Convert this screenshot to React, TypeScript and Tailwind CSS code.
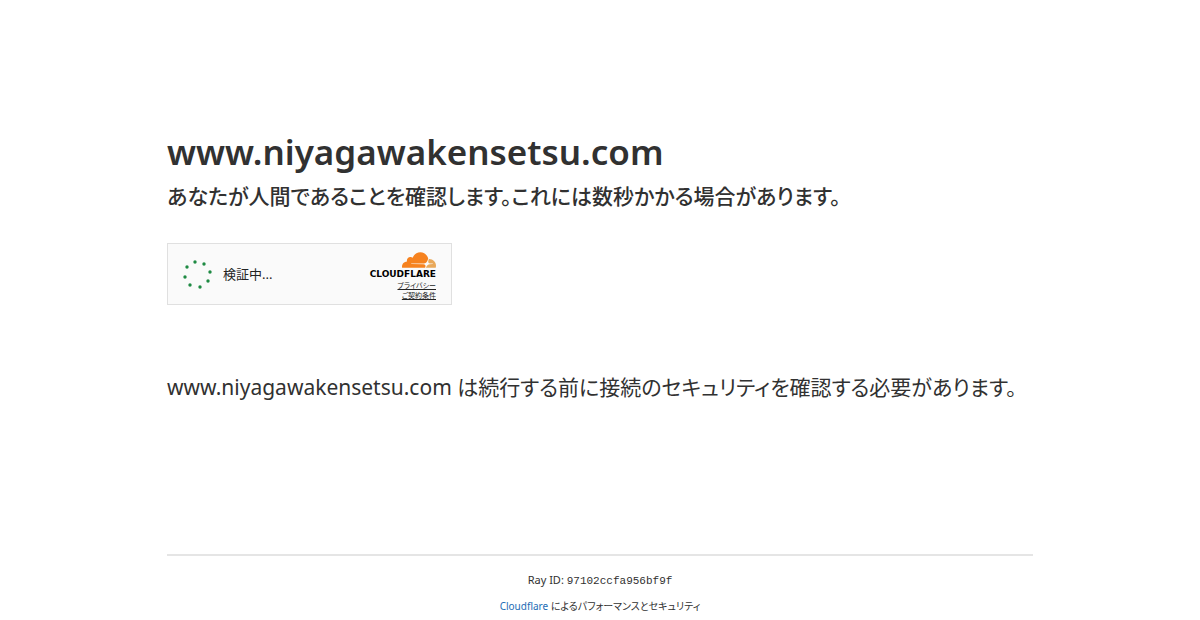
const HOST = "www.niyagawakensetsu.com"
const RAY_ID = "97102ccfa956bf9f"

function Spinner() {
  const dots = [
    [13, 3],
    [22, 5],
    [28, 13],
    [26, 22],
    [18, 28],
    [8, 26],
    [3, 18],
    [5, 8],
  ]

  return (
    <svg viewBox="0 0 31 31" className="size-[31px] shrink-0 fill-[#1e8a43]" aria-hidden="true">
      {dots.map(([cx, cy]) => (
        <circle key={`${cx}-${cy}`} cx={cx} cy={cy} r={1.7} />
      ))}
    </svg>
  )
}

function CloudLogo() {
  return (
    <svg viewBox="0 6.5 24 11" className="h-4 w-[34px]" aria-hidden="true">
      <path
        fill="#f6821f"
        d="M16.5088 16.8447c.1475-.5068.0908-.9707-.1553-1.3154-.2246-.3164-.6045-.499-1.0615-.5205l-8.6592-.1123a.1559.1559 0 0 1-.1333-.0713c-.0283-.042-.0351-.0986-.021-.1553.0278-.084.1123-.1484.2036-.1562l8.7359-.1123c1.0351-.0489 2.1601-.8868 2.5537-1.9136l.499-1.3013c.0215-.0561.0293-.1128.0147-.168-.5625-2.5463-2.835-4.4453-5.5499-4.4453-2.5039 0-4.6284 1.6177-5.3876 3.8614-.4927-.3658-1.1187-.5625-1.794-.499-1.2026.119-2.1665 1.083-2.2861 2.2856-.0283.31-.0069.6128.0635.894C1.5683 13.171 0 14.7754 0 16.752c0 .1748.0142.3515.0352.5273.0141.083.0844.1475.1689.1475h15.9814c.0909 0 .1758-.0645.2032-.1553l.12-.4268z"
      />
      <path
        fill="#e9a95b"
        d="M19.2656 11.2813c-.0771 0-.1611 0-.2383.0112-.0566 0-.1054.0415-.127.0976l-.3378 1.1744c-.1475.5068-.0918.9707.1543 1.3164.2256.3164.6055.498 1.0625.5195l1.8437.1133c.0557 0 .1055.0263.1329.0703.0283.043.0351.1074.0214.1562-.0283.084-.1132.1485-.204.1553l-1.921.1123c-1.041.0488-2.1582.8867-2.5527 1.914l-.1406.3585c-.0283.0713.0215.1416.0986.1416h6.5977c.0771 0 .1474-.0489.169-.126.1122-.4082.1757-.837.1757-1.2803 0-2.6025-2.125-4.727-4.7344-4.727"
      />
    </svg>
  )
}

function Turnstile() {
  return (
    <div className="flex h-[62px] w-[285px] items-center justify-between border border-[#e0e0e0] bg-[#fafafa] pr-[15px] pl-[14px]">
      <div className="flex items-center gap-[10px]" role="status">
        <Spinner />
        <span className="text-[13px] leading-5 text-[#232323]">検証中...</span>
      </div>
      <div className="flex flex-col items-end pt-[5px]">
        <CloudLogo />
        <span className="font-['DejaVu_Sans',sans-serif] text-[9px] leading-3 font-bold text-black">
          CLOUDFLARE
        </span>
        <div className="mt-px flex flex-col items-end text-[7px] leading-[10px] text-[#232323]">
          <a href="#privacy" className="underline">
            プライバシー
          </a>
          <a href="#terms" className="underline">
            ご契約条件
          </a>
        </div>
      </div>
    </div>
  )
}

export default function App() {
  return (
    <div className="flex min-h-screen flex-col bg-white px-6 font-['Noto_Sans','Noto_Sans_CJK_JP',sans-serif] text-[#313131] [font-feature-settings:'palt']">
      <main className="mx-auto w-full max-w-[866px] flex-1 pt-[124px]">
        <h1 className="text-[35px] leading-[56px] font-semibold">{HOST}</h1>
        <h2 className="text-[21px] leading-8 font-medium">
          あなたが人間であることを確認します。これには数秒かかる場合があります。
        </h2>
        <div className="mt-[31px]">
          <Turnstile />
        </div>
        <p className="mt-16 text-[21px] leading-9">
          {HOST} は続行する前に接続のセキュリティを確認する必要があります。
        </p>
      </main>
      <footer className="mx-auto w-full max-w-[866px] border-t-2 border-[#e5e5e5] pt-[15px] pb-[5px] text-center text-[11px] leading-[18px]">
        <div>
          Ray ID: <code className="font-['Liberation_Mono',monospace]">{RAY_ID}</code>
        </div>
        <div className="mt-[7px] text-[10px]">
          <a href="#cloudflare" className="text-[#1d6cb5]">
            Cloudflare
          </a>{" "}
          によるパフォーマンスとセキュリティ
        </div>
      </footer>
    </div>
  )
}
